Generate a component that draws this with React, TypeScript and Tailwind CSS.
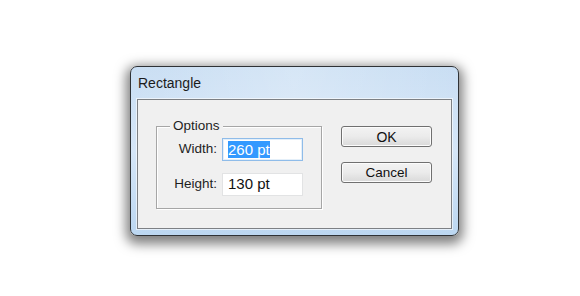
export default function App() {
  return (
    <div className="w-[580px] h-[296px] bg-white pl-[130px] pt-[66px] font-['Liberation_Sans',Arial,sans-serif]">
      <div className="w-[329px] h-[170px] rounded-[7px] border border-[#2f3236] bg-gradient-to-b from-[#c9def3] via-[#d5e6f8] to-[#bcd7f1] shadow-[0_4px_12px_4px_rgba(0,0,0,0.5)] flex flex-col">
        {/* title bar */}
        <div className="h-[32px] flex items-center pl-[7px] text-[14px] text-[#1b1b1b] bg-gradient-to-r from-transparent via-white/25 to-transparent rounded-t-[7px]">
          Rectangle
        </div>

        {/* client area */}
        <div className="mx-[6px] h-[130px] border border-[#7d8084] bg-[#f0f0f0] shadow-[0_0_0_1px_rgba(255,255,255,0.6)] flex pl-[18px] pt-[26px] gap-[19px]">
          <fieldset className="relative w-[166px] h-[83px] border border-[#a6a6a6] shadow-[inset_1px_1px_0_#fff,1px_1px_0_#fff] px-0 pt-[11px]">
            <legend className="absolute -top-[9px] left-[13px] px-[3px] bg-[#f0f0f0] text-[13.5px] leading-[16px] text-[#1e1e1e]">
              Options
            </legend>
            <div className="grid grid-cols-[60px_81px] gap-x-[5px] gap-y-[12px] items-center text-[13.5px] text-[#1e1e1e]">
              <span className="text-right">Width:</span>
              <div className="h-[23px] border border-[#8fbce9] bg-white flex items-center pl-[5px] text-[15px] shadow-[inset_0_0_0_1px_#e4eff9]">
                <span className="bg-[#3399ff] text-white leading-[17px]">260 pt</span>
              </div>
              <span className="text-right">Height:</span>
              <div className="h-[23px] border border-[#e2e3e4] bg-white flex items-center pl-[5px] text-[15px] text-[#111]">
                130 pt
              </div>
            </div>
          </fieldset>

          <div className="flex flex-col gap-[15px]">
            <button className="w-[91px] h-[21px] rounded-[3px] border border-[#707070] bg-gradient-to-b from-[#f3f3f3] via-[#ebebeb] to-[#d9d9d9] shadow-[inset_0_0_0_1px_#fcfcfc] text-[14px] text-[#111] leading-none">
              OK
            </button>
            <button className="w-[91px] h-[21px] rounded-[3px] border border-[#707070] bg-gradient-to-b from-[#f3f3f3] via-[#ebebeb] to-[#d9d9d9] shadow-[inset_0_0_0_1px_#fcfcfc] text-[13.5px] text-[#111] leading-none">
              Cancel
            </button>
          </div>
        </div>
      </div>
    </div>
  );
}
